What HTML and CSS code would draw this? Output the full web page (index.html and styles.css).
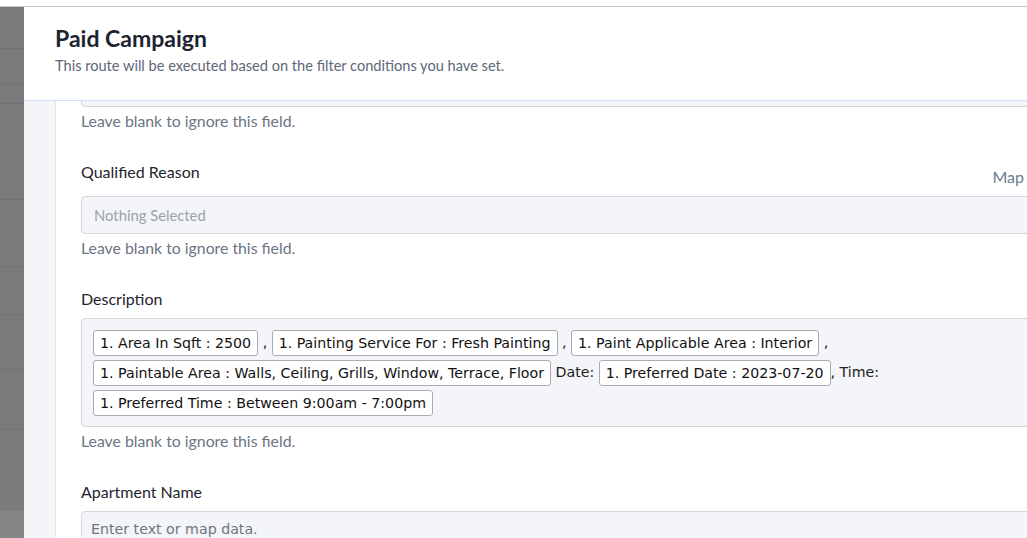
FILE: index.html
```html
<!DOCTYPE html>
<html lang="en">

<head>
    <meta charset="UTF-8">
    <meta name="viewport" content="width=device-width, initial-scale=1.0">
    <title>Paid Campaign</title>
    <link rel="stylesheet" href="styles.css">
</head>

<body>
    <div class="topbar"></div>

    <div class="stage">
        <!-- page behind the overlay -->
        <div class="backdrop">
            <div class="bd-row" style="height: 42px"></div>
            <div class="bd-row" style="height: 36px"></div>
            <div class="bd-row" style="height: 19px"></div>
            <div class="bd-row" style="height: 96px"></div>
            <div class="bd-row" style="height: 67px"></div>
            <div class="bd-row" style="height: 48px"></div>
            <div class="bd-row" style="height: 55px"></div>
            <div class="bd-row" style="height: 60px"></div>
            <div class="bd-row" style="height: 80px"></div>
            <div class="bd-foot"></div>
        </div>

        <div class="modal">
            <div class="modal-head">
                <h1>Paid Campaign</h1>
                <p>This route will be executed based on the filter conditions you have set.</p>
            </div>

            <div class="modal-body">
                <div class="card">
                    <div class="field field-first">
                        <div class="input"></div>
                        <div class="hint">Leave blank to ignore this field.</div>
                    </div>

                    <div class="field">
                        <div class="field-head">
                            <label>Qualified Reason</label>
                            <a class="map-link">Map</a>
                        </div>
                        <div class="input select">Nothing Selected</div>
                        <div class="hint">Leave blank to ignore this field.</div>
                    </div>

                    <div class="field">
                        <div class="field-head">
                            <label>Description</label>
                        </div>
                        <div class="input tags">
                            <span class="tag">1. Area In Sqft : 2500</span> ,
                            <span class="tag">1. Painting Service For : Fresh Painting</span> ,
                            <span class="tag">1. Paint Applicable Area : Interior</span> ,
                            <span class="tag">1. Paintable Area : Walls, Ceiling, Grills, Window, Terrace, Floor</span>
                            Date:
                            <span class="tag">1. Preferred Date : 2023-07-20</span>, Time:
                            <span class="tag">1. Preferred Time : Between 9:00am - 7:00pm</span>
                        </div>
                        <div class="hint">Leave blank to ignore this field.</div>
                    </div>

                    <div class="field">
                        <div class="field-head">
                            <label>Apartment Name</label>
                        </div>
                        <div class="input text">Enter text or map data.</div>
                    </div>
                </div>
            </div>
        </div>
    </div>
</body>

</html>
```

FILE: styles.css
```css
body {
    margin: 0;
    font-family: 'Lato', 'Noto Sans', sans-serif;
    background-color: white;
    height: 538px;
    overflow: hidden;
}

.topbar {
    height: 6px;
    border-bottom: 1px solid #c9c9c9;
}

.stage {
    display: flex;
    height: 531px;
}

.backdrop {
    width: 24px;
    flex-shrink: 0;
    background-color: #7b7b7b;
    display: flex;
    flex-direction: column;
}

.bd-row {
    border-bottom: 1px solid #717377;
    box-sizing: border-box;
}

.bd-foot {
    flex: 1;
    background-color: #858585;
}

.modal {
    flex: 1;
    display: flex;
    flex-direction: column;
    min-width: 0;
}

.modal-head {
    height: 94px;
    box-sizing: border-box;
    padding: 17px 0 0 31px;
    border-bottom: 1px solid #d3e2fb;
    background: white;
}

.modal-head h1 {
    margin: 0;
    font-size: 23px;
    line-height: 28px;
    font-weight: 700;
    color: #1d2330;
}

.modal-head p {
    margin: 4px 0 0;
    font-size: 14.6px;
    line-height: 20px;
    color: #5d6777;
}

.modal-body {
    flex: 1;
    display: flex;
    padding-left: 31px;
    background-color: #f3f5f8;
    overflow: hidden;
}

.card {
    flex: 1;
    min-width: 0;
    background: white;
    border-left: 1px solid #e3e6eb;
    padding-left: 25px;
    overflow: hidden;
}

.field {
    width: 1000px;
    margin-top: 31px;
}

/* first field is scrolled up under the header */
.field-first {
    margin-top: -32px;
}

.field-head {
    display: flex;
    justify-content: space-between;
    align-items: flex-start;
    margin-bottom: 9px;
}

label {
    font-size: 16px;
    line-height: 20px;
    color: #1f2430;
}

.map-link {
    margin-top: 5px;
    margin-right: 57px;
    font-size: 16px;
    line-height: 20px;
    color: #6b7a90;
    cursor: pointer;
}

.input {
    height: 38px;
    box-sizing: border-box;
    border: 1px solid #d3d7de;
    border-radius: 4px;
    background-color: #f3f5f8;
}

.select {
    padding: 0 12px;
    font-size: 14.8px;
    line-height: 36px;
    color: #9aa2ad;
}

.text {
    height: 60px;
    padding: 8px 9px;
    font-family: 'DejaVu Sans', Verdana, sans-serif;
    font-size: 14.2px;
    line-height: 18px;
    color: #6e7580;
}

.tags {
    height: auto;
    padding: 8px 11px 9px;
    font-family: 'DejaVu Sans', Verdana, sans-serif;
    font-size: 14.2px;
    line-height: 30px;
    color: #222;
}

.tag {
    display: inline-block;
    vertical-align: middle;
    line-height: 24px;
    padding: 0 6px;
    border: 1px solid #a9acb0;
    border-radius: 3px;
    background: white;
    color: #111;
}

.hint {
    margin-top: 4px;
    font-size: 15.8px;
    line-height: 20px;
    color: #6b7584;
}
```
